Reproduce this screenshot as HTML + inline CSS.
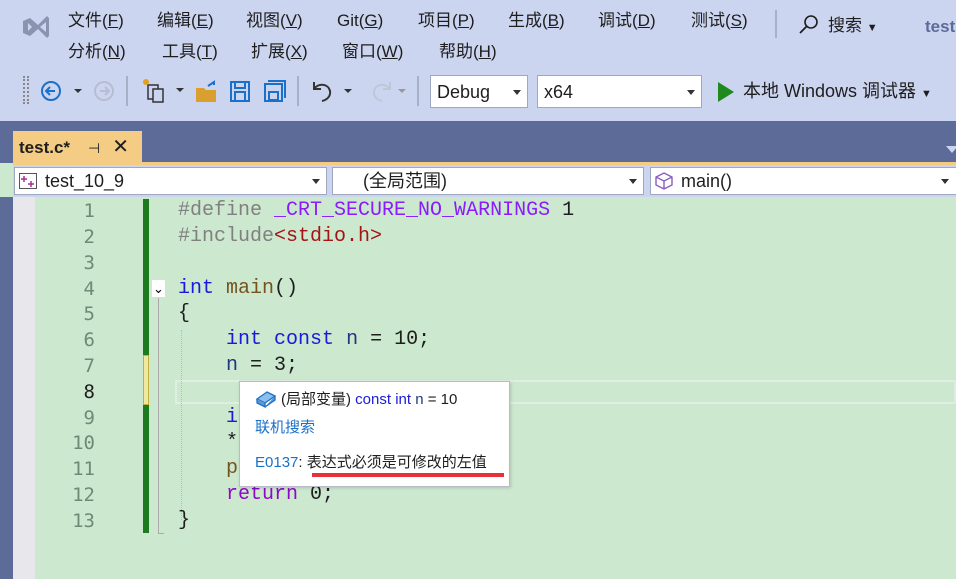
<!DOCTYPE html>
<html><head><meta charset="utf-8"><style>
*{margin:0;padding:0;box-sizing:border-box}
body{width:956px;height:579px;overflow:hidden;position:relative;background:#cce8cf;font-family:"Liberation Sans","Noto Sans CJK SC",sans-serif}
.a{position:absolute;line-height:22px}
.top{left:0;top:0;width:956px;height:121px;background:#ccd5f0}
.m{font-size:17px;color:#1e1e1e;top:10px;height:22px}
.m2{top:41px}
.band{left:0;top:121px;width:956px;height:42px;background:#5d6b99}
.tab{left:13px;top:131px;width:129px;height:32px;background:#f5cc84;font-weight:bold;font-size:17px;padding:5px 6px;color:#1e1e1e}
.yl{left:13px;top:162px;width:943px;height:3px;background:#f5cc84}
.dd{background:#fff;border:1px solid #a0a8c0;height:28px;font-size:18px;padding:2px 6px;color:#1e1e1e;line-height:22px}
.arr{position:absolute;right:6px;top:11px;border-left:4px solid transparent;border-right:4px solid transparent;border-top:5px solid #333}
.ln{font-family:"DejaVu Sans Mono","Liberation Mono",monospace;font-size:19px;color:#6e8a76;width:60px;text-align:right;left:35px;line-height:26px}
.c{font-family:"Liberation Mono","Noto Sans CJK SC",monospace;font-size:20px;left:178px;white-space:pre;color:#1e1e1e;line-height:26px}
.k{color:#1a1adb}.p{color:#808080}.s{color:#a31515}.f{color:#74531f}.r{color:#8f08c4}.v{color:#1f377f}
</style></head><body>
<div class="a top"></div>
<svg class="a" style="left:20px;top:12px" width="32" height="30"><path d="M3 9 L10 6 L18 13 L27 4 L29 6 L29 24 L27 26 L18 17 L10 24 L3 21 Z M8 11 L8 19 L12 15 Z M20 15 L26 20 L26 10 Z" fill="#8a94b0" fill-rule="evenodd"/></svg>
<div class="a m" style="left:68px">文件(<u>F</u>)</div>
<div class="a m" style="left:157px">编辑(<u>E</u>)</div>
<div class="a m" style="left:246px">视图(<u>V</u>)</div>
<div class="a m" style="left:337px">Git(<u>G</u>)</div>
<div class="a m" style="left:418px">项目(<u>P</u>)</div>
<div class="a m" style="left:508px">生成(<u>B</u>)</div>
<div class="a m" style="left:598px">调试(<u>D</u>)</div>
<div class="a m" style="left:691px">测试(<u>S</u>)</div>
<div class="a" style="left:775px;top:10px;width:2px;height:28px;background:#a8b0c8"></div>
<svg class="a" style="left:798px;top:14px" width="22" height="22"><circle cx="13" cy="8" r="6" fill="none" stroke="#1e1e1e" stroke-width="1.6"/><path d="M9 12L2 19" stroke="#1e1e1e" stroke-width="1.8"/></svg>
<div class="a m" style="left:828px;top:15px">搜索 <span style="font-size:11px">▼</span></div>
<div class="a m" style="left:925px;top:16px;font-weight:bold;color:#5d6b99">test</div>
<div class="a m m2" style="left:68px">分析(<u>N</u>)</div>
<div class="a m m2" style="left:162px">工具(<u>T</u>)</div>
<div class="a m m2" style="left:251px">扩展(<u>X</u>)</div>
<div class="a m m2" style="left:342px">窗口(<u>W</u>)</div>
<div class="a m m2" style="left:439px">帮助(<u>H</u>)</div>
<div class="a" style="left:23px;top:76px;width:6px;height:28px;border-left:2px dotted #888;border-right:2px dotted #888"></div>
<svg class="a" style="left:40px;top:80px" width="110" height="22">
<circle cx="11" cy="11" r="9" fill="none" stroke="#1c70c8" stroke-width="2"/><path d="M15 11H7M10 7L6 11L10 15" stroke="#1c70c8" stroke-width="2" fill="none"/>
<path d="M34 9l4 4 4-4z" fill="#333"/>
<circle cx="64" cy="11" r="9" fill="none" stroke="#b8bdd0" stroke-width="2"/><path d="M60 11H68M65 7L69 11L65 15" stroke="#b8bdd0" stroke-width="2" fill="none"/>
</svg>
<div class="a" style="left:126px;top:76px;width:2px;height:30px;background:#a8b0c8"></div>
<svg class="a" style="left:142px;top:78px" width="150" height="26">
<rect x="6" y="7" width="10" height="14" fill="none" stroke="#333" stroke-width="1.5"/><rect x="11" y="11" width="10" height="13" fill="#ccd5f0" stroke="#333" stroke-width="1.5"/><circle cx="4" cy="4" r="3" fill="#e0a020"/>
<path d="M34 10l4 4 4-4z" fill="#333"/>
<path d="M54 10h8l2 2h10v12H54z" fill="#d9a030"/><path d="M66 8l6-4v3" stroke="#1c70c8" stroke-width="2" fill="none"/>
<rect x="89" y="4" width="18" height="19" fill="none" stroke="#1c70c8" stroke-width="2"/><rect x="93" y="4" width="10" height="6" fill="none" stroke="#1c70c8" stroke-width="2"/><rect x="93" y="14" width="10" height="9" fill="none" stroke="#1c70c8" stroke-width="2"/>
<rect x="123" y="6" width="17" height="17" fill="none" stroke="#1c70c8" stroke-width="2"/><rect x="127" y="14" width="9" height="8" fill="none" stroke="#1c70c8" stroke-width="2"/><path d="M126 3h17v17" stroke="#1c70c8" stroke-width="2" fill="none"/>
</svg>
<div class="a" style="left:297px;top:76px;width:2px;height:30px;background:#a8b0c8"></div>
<svg class="a" style="left:308px;top:78px" width="110" height="26">
<path d="M6 4v7h7M6 11c4-6 14-6 16 2c1 5-3 9-8 10" stroke="#333" stroke-width="2" fill="none"/>
<path d="M36 11l4 4 4-4z" fill="#333"/>
<path d="M82 4v7h-7M82 11c-4-6-14-6-16 2c-1 5 3 9 8 10" stroke="#c0c6d8" stroke-width="2" fill="none"/>
<path d="M90 11l4 4 4-4z" fill="#999"/>
</svg>
<div class="a" style="left:417px;top:76px;width:2px;height:30px;background:#a8b0c8"></div>
<div class="a dd" style="left:430px;top:75px;width:98px;height:33px;padding-top:5px">Debug<span class="arr" style="top:14px"></span></div>
<div class="a dd" style="left:537px;top:75px;width:165px;height:33px;padding-top:5px">x64<span class="arr" style="top:14px"></span></div>
<svg class="a" style="left:716px;top:81px" width="20" height="22"><path d="M2 1L18 11L2 21Z" fill="#1e8a1e"/></svg>
<div class="a" style="left:743px;top:80px;font-size:18px;color:#1e1e1e">本地 Windows 调试器 <span style="font-size:11px">▼</span></div>
<div class="a band"></div>
<div class="a tab">test.c*<span style="font-weight:normal;margin-left:18px;font-size:14px">⊣</span><span style="font-weight:normal;margin-left:12px;font-size:20px">✕</span></div>
<div class="a" style="left:946px;top:146px;border-left:6px solid transparent;border-right:6px solid transparent;border-top:7px solid #ccd5f0"></div>
<div class="a yl"></div>
<div class="a" style="left:13px;top:165px;width:943px;height:32px;background:#ccd5f0"></div>
<div class="a dd" style="left:14px;top:167px;width:313px">
<svg style="position:absolute;left:4px;top:5px" width="18" height="16"><rect x="0.5" y="0.5" width="17" height="15" fill="#fff" stroke="#555"/><path d="M5 3v6M2 6h6M12 8v6M9 11h6" stroke="#a0309a" stroke-width="1.5"/></svg>
<span style="margin-left:24px">test_10_9</span><span class="arr"></span></div>
<div class="a dd" style="left:332px;top:167px;width:312px"><span style="margin-left:24px">(全局范围)</span><span class="arr"></span></div>
<div class="a dd" style="left:650px;top:167px;width:310px">
<svg style="position:absolute;left:4px;top:4px" width="18" height="18"><path d="M9 1L17 5V13L9 17L1 13V5Z M1 5L9 9L17 5M9 9V17" fill="none" stroke="#8a5cc0" stroke-width="1.4"/></svg>
<span style="margin-left:24px">main()</span><span class="arr" style="right:10px"></span></div>
<div class="a" style="left:0;top:197px;width:13px;height:382px;background:#5d6b99"></div>
<div class="a" style="left:13px;top:197px;width:22px;height:382px;background:#e8e8ec"></div>
<div class="a" style="left:143px;top:199px;width:6px;height:334px;background:#1e7a1e"></div>
<div class="a" style="left:143px;top:355px;width:6px;height:50px;background:#f0e8a0;border:1px solid #c0b040"></div>
<div class="a" style="left:175px;top:380px;width:781px;height:24px;border:2px solid #e0eee2"></div>
<div class="a" style="left:152px;top:280px;width:13px;height:17px;background:#fff;font-size:13px;text-align:center;line-height:17px">⌄</div>
<div class="a" style="left:158px;top:298px;width:6px;height:236px;border-left:1px solid #aaa;border-bottom:1px solid #aaa"></div>
<div class="a" style="left:181px;top:330px;width:1px;height:190px;border-left:1px dotted #b0c0b0"></div>
<div class="a ln" style="top:198px">1</div><div class="a ln" style="top:224px">2</div><div class="a ln" style="top:250px">3</div><div class="a ln" style="top:276px">4</div><div class="a ln" style="top:301px">5</div><div class="a ln" style="top:327px">6</div><div class="a ln" style="top:353px">7</div><div class="a ln" style="top:379px;color:#1e1e1e">8</div><div class="a ln" style="top:405px">9</div><div class="a ln" style="top:430px">10</div><div class="a ln" style="top:456px">11</div><div class="a ln" style="top:482px">12</div><div class="a ln" style="top:508px">13</div>
<div class="a c" style="top:198px"><span class="p">#define</span> <span style="color:#8a1bff">_CRT_SECURE_NO_WARNINGS</span> 1</div>
<div class="a c" style="top:224px"><span class="p">#include</span><span class="s">&lt;stdio.h&gt;</span></div>
<div class="a c" style="top:276px"><span class="k">int</span> <span class="f">main</span>()</div>
<div class="a c" style="top:301px">{</div>
<div class="a c" style="top:327px">    <span class="k">int const</span> <span class="v">n</span> = 10;</div>
<div class="a c" style="top:353px">    <span class="v">n</span> = 3;</div>
<div class="a" style="left:226px;top:374px;width:12px;height:4px;border-bottom:2px wavy red"></div>
<div class="a c" style="top:405px">    <span class="k">i</span></div>
<div class="a c" style="top:430px">    *</div>
<div class="a c" style="top:456px">    <span class="f">p</span></div>
<div class="a c" style="top:482px">    <span class="r">return</span> 0;</div>
<div class="a c" style="top:508px">}</div>
<div class="a" style="left:239px;top:381px;width:271px;height:106px;background:#fff;border:1px solid #b8bcc8;box-shadow:1px 1px 3px rgba(0,0,0,.15)"></div>
<svg class="a" style="left:255px;top:389px" width="22" height="20"><path d="M2 10L12 3L20 7L10 14Z" fill="#8cc0ec" stroke="#1c70c8" stroke-width="1.3"/><path d="M2 10V14L10 18V14M10 18L20 11V7" fill="#5a9ad8" stroke="#1c70c8" stroke-width="1.3"/></svg>
<div class="a" style="left:281px;top:389px;font-size:15px;color:#1e1e1e">(局部变量) <span style="color:#1a1adb">const int</span> <span style="color:#1f377f">n</span> = 10</div>
<div class="a" style="left:255px;top:417px;font-size:15px;color:#1c70c8">联机搜索</div>
<div class="a" style="left:255px;top:452px;font-size:15px;color:#1e1e1e"><span style="color:#1c70c8">E0137</span>: 表达式必须是可修改的左值</div>
<div class="a" style="left:312px;top:473px;width:192px;height:4px;background:#e8303a"></div>
</body></html>
